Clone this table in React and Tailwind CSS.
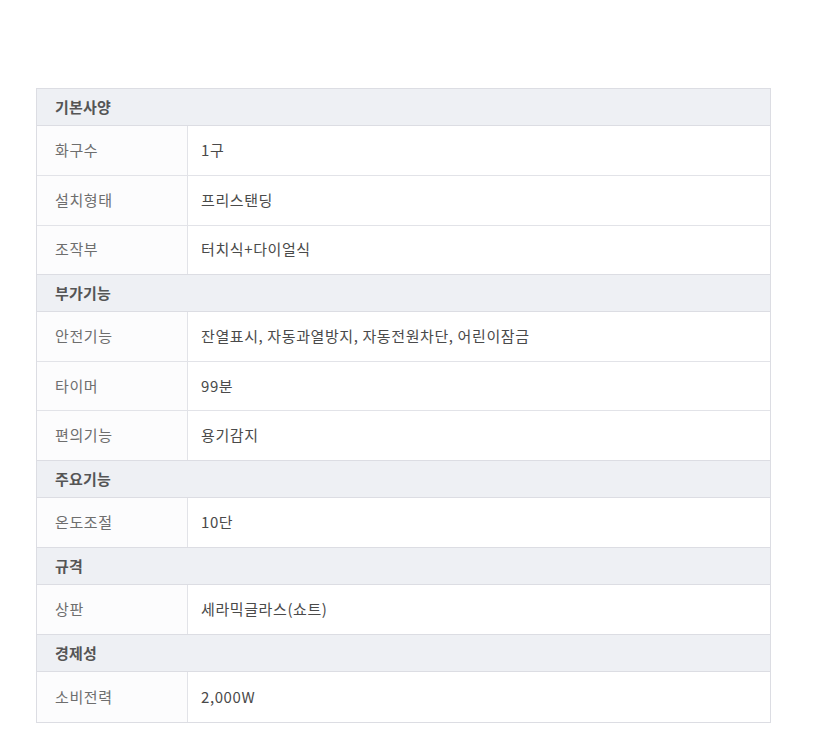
const sections = [
  {
    title: '기본사양',
    rows: [
      ['화구수', '1구'],
      ['설치형태', '프리스탠딩'],
      ['조작부', '터치식+다이얼식'],
    ],
  },
  {
    title: '부가기능',
    rows: [
      ['안전기능', '잔열표시, 자동과열방지, 자동전원차단, 어린이잠금'],
      ['타이머', '99분'],
      ['편의기능', '용기감지'],
    ],
  },
  {
    title: '주요기능',
    rows: [['온도조절', '10단']],
  },
  {
    title: '규격',
    rows: [['상판', '세라믹글라스(쇼트)']],
  },
  {
    title: '경제성',
    rows: [['소비전력', '2,000W']],
  },
];

export default function App() {
  return (
    <div
      className="w-[818px] h-[749px] bg-white pt-[88px] pl-[36px]"
      style={{ fontFamily: '"Noto Sans CJK KR", "Noto Sans", sans-serif' }}
    >
      <div className="w-[735px] border-l border-r border-b border-[#dcdde3] text-[15px] tracking-[0.6px]">
        {sections.map((s) => (
          <div key={s.title}>
            {/* section header */}
            <div className="h-[38px] flex items-center px-[18px] bg-[#eef0f4] border-t border-b border-[#dcdde3] font-bold text-[#555] tracking-[0.2px]">
              {s.title}
            </div>
            {s.rows.map(([label, value], i) => (
              <div
                key={label}
                className={`flex h-[49.3px] ${i > 0 ? 'border-t border-[#e2e3e8]' : ''}`}
              >
                <div className="w-[151px] shrink-0 flex items-center pl-[18px] bg-[#fcfcfd] border-r border-[#e2e3e8] text-[#6e6e6e]">
                  {label}
                </div>
                <div className="flex-1 flex items-center pl-[13px] text-[#4a4a4a]">{value}</div>
              </div>
            ))}
          </div>
        ))}
      </div>
    </div>
  );
}
